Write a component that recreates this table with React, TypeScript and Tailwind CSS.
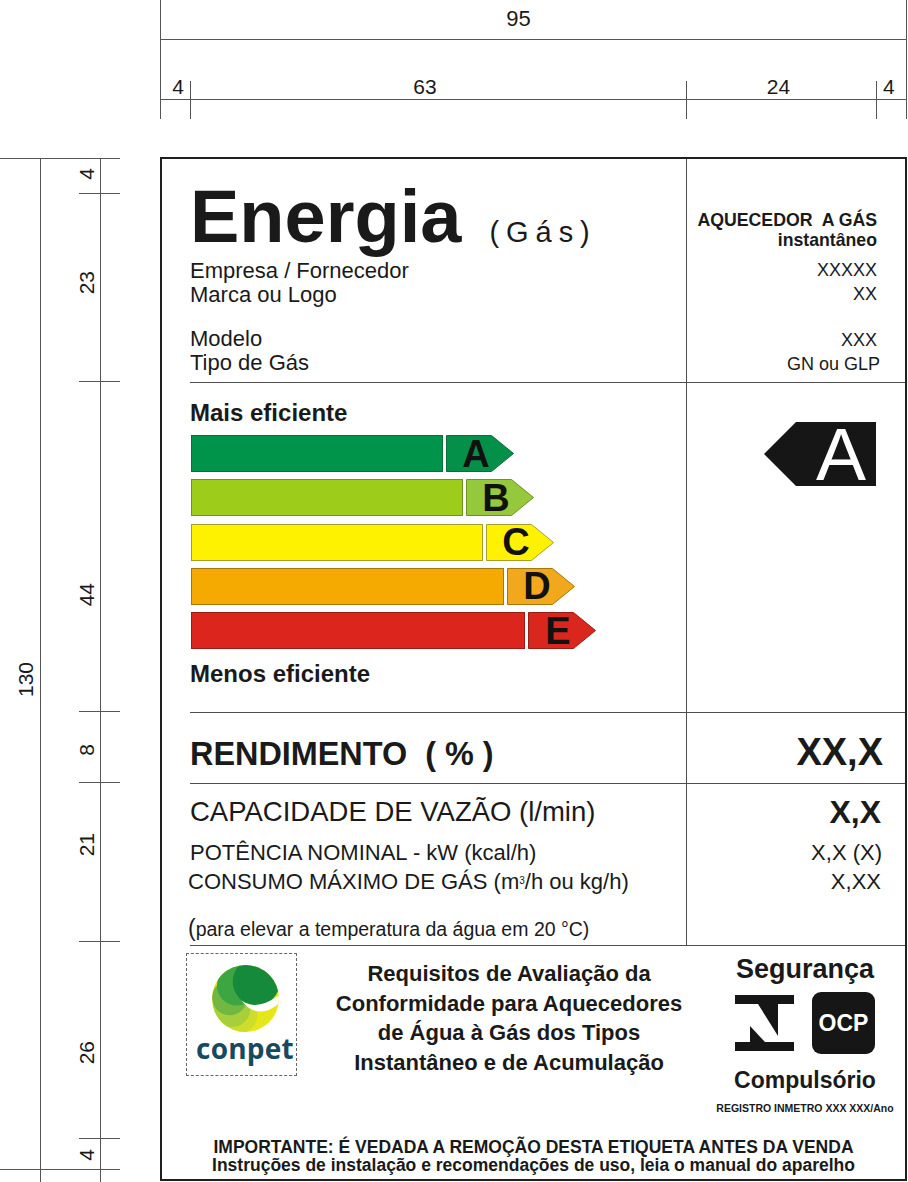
import React from 'react';

type Bar = { letter: string; width: string; bar: string; fill: string; stroke: string };

const bars: Bar[] = [
  { letter: 'A', width: 'w-[252px]', bar: 'bg-[#00944a] border-[#0b6e38]', fill: '#05904a', stroke: '#0b6e38' },
  { letter: 'B', width: 'w-[272px]', bar: 'bg-[#9ecc1b] border-[#6f9320]', fill: '#95c83a', stroke: '#6f9320' },
  { letter: 'C', width: 'w-[292px]', bar: 'bg-[#fff200] border-[#a59e2e]', fill: '#fff200', stroke: '#a59e2e' },
  { letter: 'D', width: 'w-[313px]', bar: 'bg-[#f4aa00] border-[#a7770c]', fill: '#f2a81c', stroke: '#a7770c' },
  { letter: 'E', width: 'w-[334px]', bar: 'bg-[#db251d] border-[#9b1c16]', fill: '#d9271d', stroke: '#9b1c16' },
];

// left ruler segments (mm labels), heights in px
const ruler = [
  { label: '4', h: 'h-[34px]', pt: 'pt-[9px]', tick: false },
  { label: '23', h: 'h-[187px]', pt: 'pt-[77px]', tick: true },
  { label: '44', h: 'h-[329px]', pt: 'pt-[201px]', tick: true },
  { label: '8', h: 'h-[70px]', pt: 'pt-[32px]', tick: true },
  { label: '21', h: 'h-[158px]', pt: 'pt-[50px]', tick: true },
  { label: '26', h: 'h-[196px]', pt: 'pt-[99px]', tick: true },
  { label: '4', h: 'h-[30px]', pt: 'pt-[10px]', tick: true },
];

function RatingArrow({ letter, fill, stroke }: { letter: string; fill: string; stroke: string }) {
  return (
    <div className="relative w-[68px] h-[37px] flex items-center">
      <svg className="absolute inset-0" width="68" height="37" viewBox="0 0 68 37">
        <polygon points="0.5,0.5 45.5,0.5 67.5,18.5 45.5,36.5 0.5,36.5" fill={fill} stroke={stroke} strokeWidth="1" />
      </svg>
      <span className="relative w-[60px] text-center text-[38px] leading-none font-bold text-[#111]">{letter}</span>
    </div>
  );
}

function ConpetLogo() {
  return (
    <svg width="67" height="67" viewBox="0 0 68 68">
      <defs>
        <clipPath id="conpet-clip">
          <circle cx="34" cy="34" r="34" />
        </clipPath>
      </defs>
      <g clipPath="url(#conpet-clip)">
        <rect width="68" height="68" fill="#e6e71b" />
        <circle cx="26" cy="50" r="20" fill="#cddd2b" />
        <circle cx="20" cy="44" r="19" fill="#a7cf3a" />
        <circle cx="18" cy="33" r="18" fill="#72b742" />
        <circle cx="25" cy="21" r="20" fill="#3da643" />
        <circle cx="45" cy="17" r="24" fill="#168a3b" />
        <path d="M30 36 Q45 47 68 31 L68 39 Q46 57 30 36 Z" fill="#fff" />
      </g>
    </svg>
  );
}

function InmetroLogo() {
  return (
    <svg width="59" height="60" viewBox="0 0 59 60">
      <rect x="0" y="2" width="59" height="9" fill="#161616" />
      <rect x="0" y="49" width="59" height="9" fill="#161616" />
      <rect x="15" y="11" width="28" height="38" fill="#161616" />
      <polygon points="15,11 23,11 43,43 43,49 30,49 15,33" fill="#fff" />
    </svg>
  );
}

export default function App() {
  return (
    <div className="w-[908px] h-[1182px] overflow-hidden bg-white text-[#1a1a1a] font-['Liberation_Sans',Arial,sans-serif]">
      {/* Top dimensions */}
      <div className="flex">
        <div className="w-[160px] shrink-0" />
        <div className="w-[747px] h-[119px] border-x border-[#555] flex flex-col">
          <div className="h-[40px] border-b border-[#555] flex justify-center pr-[30px]">
            <span className="text-[22px] leading-[37px]">95</span>
          </div>
          <div className="h-[41px]" />
          <div className="flex h-[38px] text-[21px] leading-[12px]">
            <div className="w-[29px] flex flex-col">
              <div className="h-[19px] border-b border-[#555] flex justify-end pr-[6px]">4</div>
            </div>
            <div className="w-[496px] border-l border-[#555] flex flex-col">
              <div className="h-[19px] border-b border-[#555] flex justify-center pr-[27px]">63</div>
            </div>
            <div className="w-[190px] border-l border-[#555] flex flex-col">
              <div className="h-[19px] border-b border-[#555] flex justify-center pr-[6px]">24</div>
            </div>
            <div className="flex-1 border-l border-[#555] flex flex-col">
              <div className="h-[19px] border-b border-[#555] flex pl-[6px]">4</div>
            </div>
          </div>
        </div>
      </div>
      <div className="h-[38px]" />

      <div className="flex items-start">
        {/* Left ruler */}
        <div className="w-[160px] shrink-0 mt-px">
          <div className="w-[120px] flex flex-col">
            <div className="h-[1012px] border-y border-[#555] flex">
              <div className="w-[41px] border-r border-[#555] pt-[503px] pl-[15px]">
                <div className="[writing-mode:vertical-rl] rotate-180 text-[21px] leading-[21px]">130</div>
              </div>
              <div className="flex-1 flex flex-col">
                {ruler.map((seg, i) => (
                  <div key={i} className="flex flex-col">
                    {seg.tick && <div className="h-px ml-[38px] w-[41px] bg-[#555]" />}
                    <div className={`w-[60px] border-r border-[#555] pl-[35px] ${seg.h} ${seg.pt}`}>
                      <div className="[writing-mode:vertical-rl] rotate-180 text-[21px] leading-[21px]">{seg.label}</div>
                    </div>
                  </div>
                ))}
              </div>
            </div>
            <div className="flex h-[13px]">
              <div className="w-[41px] border-r border-[#555]" />
              <div className="w-[60px] border-r border-[#555]" />
            </div>
          </div>
        </div>

        {/* Label */}
        <div className="w-[747px] h-[1024px] border-2 border-[#1f1f1f] flex flex-col">
          {/* Header */}
          <div className="h-[224px] ml-[28px] flex border-b border-[#4d4d4d]">
            <div className="w-[496px] pt-[21px]">
              <div className="flex items-baseline">
                <span className="text-[74px] leading-[74px] font-bold">Energia</span>
                <span className="ml-[28px] text-[29px] tracking-[0.24em]">(Gás)</span>
              </div>
              <div className="mt-[4px] text-[22px] leading-[24px]">
                <div>Empresa / Fornecedor</div>
                <div>Marca ou Logo</div>
              </div>
              <div className="mt-[20px] text-[22px] leading-[24px]">
                <div>Modelo</div>
                <div>Tipo de Gás</div>
              </div>
            </div>
            <div className="flex-1 border-l border-[#4d4d4d] pt-[51px] pr-[28px] text-right">
              <div className="text-[17.7px] leading-[20px] font-bold whitespace-pre">AQUECEDOR  A GÁS</div>
              <div className="text-[17.7px] leading-[21px] font-bold">instantâneo</div>
              <div className="mt-[7px] text-[18px] leading-[24px]">
                <div>XXXXX</div>
                <div>XX</div>
              </div>
              <div className="mt-[22px] text-[18px] leading-[24px]">
                <div>XXX</div>
                <div className="-mr-[3px]">GN ou GLP</div>
              </div>
            </div>
          </div>

          {/* Energy scale */}
          <div className="h-[330px] ml-[28px] flex border-b border-[#4d4d4d]">
            <div className="w-[496px] pt-[16px]">
              <div className="text-[24px] leading-[28px] font-bold">Mais eficiente</div>
              <div className="mt-[8px] flex flex-col gap-[7.25px]">
                {bars.map(b => (
                  <div key={b.letter} className="flex items-center gap-[3px] pl-px">
                    <div className={`h-[37px] border ${b.width} ${b.bar}`} />
                    <RatingArrow letter={b.letter} fill={b.fill} stroke={b.stroke} />
                  </div>
                ))}
              </div>
              <div className="mt-[11px] text-[24px] leading-[28px] font-bold">Menos eficiente</div>
            </div>
            <div className="flex-1 border-l border-[#4d4d4d] pt-[39px] pr-[29px] flex justify-end items-start">
              <div className="relative w-[112px] h-[64px] flex items-center justify-end">
                <svg className="absolute inset-0" width="112" height="64" viewBox="0 0 112 64">
                  <polygon points="0,32 32,0 112,0 112,64 32,64" fill="#161616" />
                </svg>
                <span className="relative w-[80px] pl-[10px] text-center text-[75px] leading-none text-white">A</span>
              </div>
            </div>
          </div>

          {/* Rendimento */}
          <div className="h-[71px] ml-[28px] flex border-b border-[#4d4d4d]">
            <div className="w-[496px] pt-[23px] text-[32.4px] leading-[36px] font-bold whitespace-pre">RENDIMENTO  ( % )</div>
            <div className="flex-1 border-l border-[#4d4d4d] pt-[19px] pr-[22px] text-right text-[38px] leading-[40px] font-bold">
              XX,X
            </div>
          </div>

          {/* Capacidade */}
          <div className="h-[162px] ml-[28px] flex border-b border-[#4d4d4d]">
            <div className="w-[496px] pt-[13px]">
              <div className="text-[27.5px] leading-[30px]">CAPACIDADE DE VAZÃO (l/min)</div>
              <div className="mt-[11px] text-[22px] leading-[29px]">
                <div>POTÊNCIA NOMINAL - kW (kcal/h)</div>
                <div className="-ml-[2px] whitespace-nowrap">
                  CONSUMO MÁXIMO DE GÁS (m<sup className="text-[10px]">3</sup>/h ou kg/h)
                </div>
              </div>
              <div className="mt-[20px] -ml-[2px] text-[19.5px] leading-[24px] whitespace-nowrap">
                <span className="text-[23px]">(</span>para elevar a temperatura da água em 20 °C)
              </div>
            </div>
            <div className="flex-1 border-l border-[#4d4d4d] pt-[10px] pr-[24px] text-right">
              <div className="text-[32px] leading-[36px] font-bold">X,X</div>
              <div className="mt-[8px] text-[22px] leading-[29px]">
                <div className="-mr-px">X,X (X)</div>
                <div>X,XX</div>
              </div>
            </div>
          </div>

          {/* Bottom: logos and notes */}
          <div className="h-[233px] flex flex-col">
            <div className="flex items-start">
              <div className="ml-[24px] mt-[7px] w-[111px] h-[123px] border border-dashed border-[#666] flex flex-col items-center pl-[7px] pt-[11px]">
                <ConpetLogo />
                <div className="mt-[3px] text-[28px] leading-[27px] font-bold tracking-[0.2px] text-[#174a5e] font-['Open_Sans',Arial,sans-serif]">
                  conpet
                </div>
              </div>
              <div className="ml-[3px] w-[418px] pt-[13px] text-center text-[22px] leading-[29.5px] font-bold">
                <div>Requisitos de Avaliação da</div>
                <div>Conformidade para Aquecedores</div>
                <div>de Água à Gás dos Tipos</div>
                <div>Instantâneo e de Acumulação</div>
              </div>
              <div className="w-[174px] pt-[8px] flex flex-col items-center font-bold">
                <div className="text-[27px] leading-[30px]">Segurança</div>
                <div className="mt-[8px] flex items-start gap-[18px]">
                  <div className="mt-px">
                    <InmetroLogo />
                  </div>
                  <div className="w-[63px] h-[62px] rounded-[9px] bg-[#161616] flex items-center justify-center text-white text-[23px] leading-none">
                    OCP
                  </div>
                </div>
                <div className="mt-[13px] text-[23px] leading-[26px]">Compulsório</div>
                <div className="mt-[9px] text-[10.5px] leading-[12px] whitespace-nowrap">REGISTRO INMETRO XXX XXX/Ano</div>
              </div>
            </div>
            <div className="mt-auto pb-[5px] text-center text-[17.5px] leading-[18px] font-bold">
              <div>IMPORTANTE: É VEDADA A REMOÇÃO DESTA ETIQUETA ANTES DA VENDA</div>
              <div>Instruções de instalação e recomendações de uso, leia o manual do aparelho</div>
            </div>
          </div>
        </div>
      </div>
    </div>
  );
}
